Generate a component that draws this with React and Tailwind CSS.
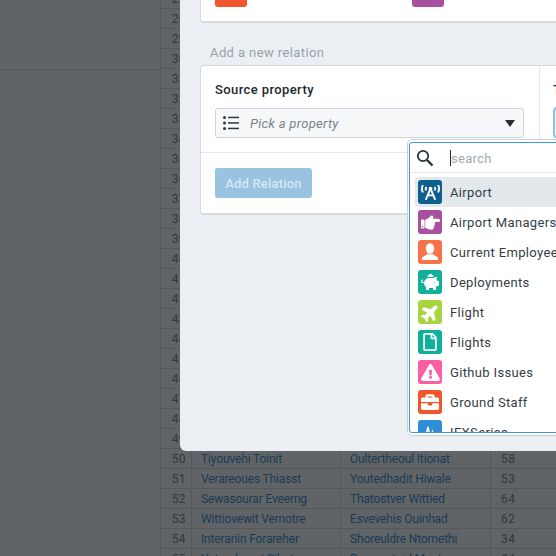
import React from "react";
import { FaBroadcastTower, FaHandPointRight, FaPiggyBank, FaPlane, FaRegFile, FaExclamationTriangle, FaBriefcase } from "react-icons/fa";

const named = {
  50: ["Tiyouvehi Toinit", "Oultertheoul Itionat", "58"],
  51: ["Verareoues Thiasst", "Youtedhadit Hiwale", "53"],
  52: ["Sewasourar Eveerng", "Thatostver Wittied", "64"],
  53: ["Wittiovewit Vernotre", "Esvevehis Ouinhad", "62"],
  54: ["Interanin Forareher", "Shoreuldre Ntomethi", "34"],
  55: ["Uetoreheaet Sihatar", "Bumevetoid Mostor", "24"],
};
const rows = Array.from({ length: 29 }, (_, i) => 27 + i);

function PersonGlyph() {
  return (
    <svg width="20" height="20" viewBox="0 0 20 20" fill="#fff">
      <ellipse cx="10" cy="6.5" rx="4.2" ry="5.2" />
      <path d="M7.6 11.5c-.2 1.8-4.6 2.6-5.6 4.2V18h16v-2.3c-1-1.6-5.4-2.4-5.6-4.2C11.5 12.7 8.500 12.700 7.600 11.500z" />
    </svg>
  );
}

function PulseGlyph() {
  return (
    <svg width="20" height="20" viewBox="0 0 20 20" fill="none" stroke="#fff" strokeWidth="1.6">
      <path d="M1 13h5l2-8 2.500 12 2-7 1 3h5.500" />
    </svg>
  );
}

const items = [
  ["Airport", "bg-[#0f5f8e]", <FaBroadcastTower size={19} />],
  ["Airport Managers", "bg-[#a8509f]", <FaHandPointRight size={19} />],
  ["Current Employees", "bg-[#f8734c]", <PersonGlyph />],
  ["Deployments", "bg-[#12b09a]", <FaPiggyBank size={18} />],
  ["Flight", "bg-[#a8d43e]", <FaPlane size={19} className="-rotate-45" />],
  ["Flights", "bg-[#12b09a]", <FaRegFile size={18} />],
  ["Github Issues", "bg-[#fb5fa2]", <FaExclamationTriangle size={19} />],
  ["Ground Staff", "bg-[#f1552c]", <FaBriefcase size={18} />],
  ["IEXSeries", "bg-[#2f8fd6]", <PulseGlyph />],
];

function SearchGlyph() {
  return (
    <svg width="18" height="18" viewBox="0 0 18 18" fill="none" stroke="#2b3238" strokeWidth="1.8">
      <circle cx="7" cy="7" r="5.2" />
      <path d="M11 11l5.500 5.500" strokeWidth="2.400" />
    </svg>
  );
}

function ListGlyph() {
  return (
    <svg width="16" height="14" viewBox="0 0 16 14" fill="#2f363c">
      <circle cx="1.500" cy="1.500" r="1.500" />
      <circle cx="1.500" cy="7" r="1.500" />
      <circle cx="1.500" cy="12.500" r="1.500" />
      <rect x="5" y="0.700" width="11" height="1.500" />
      <rect x="5" y="6.200" width="11" height="1.500" />
      <rect x="5" y="11.700" width="11" height="1.500" />
    </svg>
  );
}

export default function App() {
  return (
    <div className="relative h-[556px] w-[556px] overflow-hidden bg-[#606467] font-['Roboto',sans-serif] text-[12px]">
      <div className="flex">
        <div className="h-[70px] w-[160px] shrink-0 border-b border-[#54585b]" />
        <div className="-mt-[11px] w-[500px] shrink-0 border-l border-[#54585b]">
          {rows.map((n) => (
            <div key={n} className="flex h-[20px] items-center border-b border-[#54585b] tracking-[-0.15px]">
              <div className="h-full w-[31px] shrink-0 border-r border-[#54585b] pr-[5px] text-right leading-[21px] tracking-[0.4px] text-[#32373b]">{n}</div>
              <div className="h-full w-[149px] shrink-0 whitespace-nowrap border-r border-[#54585b] pl-[9px] leading-[21px] text-[#1c3a55]">{named[n]?.[0]}</div>
              <div className="h-full w-[150px] shrink-0 whitespace-nowrap border-r border-[#54585b] pl-[9px] leading-[21px] text-[#1c3a55]">{named[n]?.[1]}</div>
              <div className="h-full pl-[10px] leading-[21px] tracking-[0.4px] text-[#32373b]">{named[n]?.[2]}</div>
            </div>
          ))}
        </div>
      </div>

      <div className="absolute left-[180px] top-0 h-[451px] w-[420px] rounded-bl-[6px] bg-[#ebeff3] pl-[20px]">
        <div className="flex h-[23px] w-[400px] gap-[165px] rounded-bl-[4px] border-b-2 border-l border-[#d5dade] bg-white pl-[14px]">
          <div className="h-[7px] w-[32px] rounded-b-[3px] bg-[#f1552c]" />
          <div className="h-[7px] w-[32px] rounded-b-[3px] bg-[#a8509f]" />
        </div>
        <div className="ml-[10px] mt-[21px] h-[15px] text-[13px] leading-[17px] tracking-[0.4px] text-[#9aa2a9]">Add a new relation</div>
        <div className="mt-[6px] w-[400px] rounded-l-[4px] border-b-2 border-l border-t border-[#d5dade] bg-white">
          <div className="flex h-[87px] border-b border-[#e6e9ec]">
            <div className="w-[339px] shrink-0 border-r border-[#e6e9ec] pl-[14px] pr-[15px] pt-[15px]">
              <div className="h-[16px] text-[13px] font-medium leading-[18px] tracking-[0.4px] text-[#22292f]">Source property</div>
              <div className="mt-[11px] flex h-[30px] items-center rounded-[3px] border border-[#cdd3d8] bg-[#f6f8f9] pl-[7px] pr-[8px]">
                <ListGlyph />
                <span className="ml-[11px] translate-y-[1px] text-[13px] italic tracking-[0.3px] text-[#7b838a]">Pick a property</span>
                <span className="ml-auto h-0 w-0 border-x-[5.500px] border-t-[7px] border-x-transparent border-t-[#262c32]" />
              </div>
            </div>
            <div className="pl-[13px] pt-[15px]">
              <div className="h-[16px] text-[13px] font-medium leading-[18px] text-[#22292f]">Target</div>
              <div className="mt-[10px] h-[31px] w-[100px] rounded-[4px] border-2 border-[#8cc2e6] bg-[#f6f8f9]" />
            </div>
          </div>
          <div className="px-[14px] pb-[15px] pt-[15px]">
            <div className="flex h-[30px] w-[97px] items-center justify-center rounded-[3px] bg-[#99c4e1] pt-[1px] text-[13px] font-medium tracking-[0.2px] text-[#d7e7f2]">Add Relation</div>
          </div>
        </div>
      </div>

      <div className="absolute left-[407px] top-[139px] h-[297px] w-[220px] rounded-[5px] border border-[#c9cfd4] bg-white pb-[2px] pl-[1px] pt-[2px]">
        <div className="flex h-full flex-col overflow-hidden rounded-[3px] border border-[#3d97d6]">
          <div className="flex h-[30px] shrink-0 items-center border-b border-[#e4e8eb] pl-[6px]">
            <SearchGlyph />
            <div className="ml-[16px] h-[16px] w-px bg-[#22292f]" />
            <span className="translate-y-[1px] text-[13px] tracking-[0.3px] text-[#a3aab0]">search</span>
          </div>
          <div className="pl-[5px] pt-[4px]">
            {items.map(([label, bg, icon], i) => (
              <div key={label} className={`flex h-[30px] items-center rounded-l-[3px] pl-[3px] ${i === 0 ? "bg-[#e2e8ec]" : ""}`}>
                <div className={`flex h-[24px] w-[24px] shrink-0 items-center justify-center rounded-[3px] text-white ${bg}`}>
                  {icon}
                </div>
                <span className="ml-[8px] translate-y-[1px] whitespace-nowrap text-[13px] tracking-[0.35px] text-[#363d43]">{label}</span>
              </div>
            ))}
          </div>
        </div>
      </div>
    </div>
  );
}
